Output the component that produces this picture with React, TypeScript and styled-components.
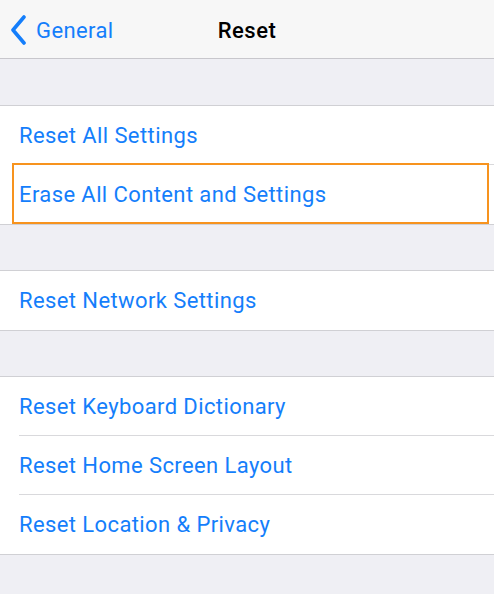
import React from 'react';
import styled, { createGlobalStyle } from 'styled-components';

const GlobalStyle = createGlobalStyle`
	html, body {
		margin: 0;
		padding: 0;
		background: #efeff4;
		font-family: Roboto, 'Liberation Sans', sans-serif;
	}
`;

const Screen = styled.div`
	width: 494px;
	height: 594px;
	background: #efeff4;
	overflow: hidden;
`;

const NavBar = styled.header`
	height: 59px;
	display: grid;
	grid-template-columns: 1fr auto 1fr;
	align-items: center;
	padding-top: 2px;
	box-sizing: border-box;
	background: #f7f7f7;
	border-bottom: 1px solid #c8c7cc;
`;

const BackButton = styled.div`
	display: flex;
	align-items: center;
	gap: 9px;
	padding-left: 10px;
	color: #147efb;
	font-size: 22px;
	letter-spacing: 0.4px;
`;

const Title = styled.div`
	font-size: 22px;
	font-weight: 500;
	letter-spacing: 0.5px;
	color: #000;
`;

const Group = styled.section`
	margin-top: 45px;
	background: #fff;
	border-top: 1px solid #d0d0d4;
	border-bottom: 1px solid #d0d0d4;
	&:first-of-type {
		margin-top: 46px;
	}
`;

const Row = styled.div<{ $last?: boolean }>`
	position: relative;
	height: 59px;
	display: flex;
	align-items: center;
	padding-left: 19px;
	font-size: 22px;
	letter-spacing: 0.4px;
	color: #147efb;
	&::after {
		content: '';
		display: ${({ $last }) => ($last ? 'none' : 'block')};
		position: absolute;
		left: 19px;
		right: 0;
		bottom: 0;
		height: 1px;
		background: #d9d9dc;
	}
`;

const Highlight = styled.div`
	position: absolute;
	left: 12px;
	right: 5px;
	top: -2px;
	bottom: 0;
	border: 2px solid #f7931e;
	box-sizing: border-box;
	pointer-events: none;
	z-index: 1;
`;

const Chevron = () => (
	<svg width="17" height="30" viewBox="0 0 17 30">
		<path d="M14 2 L3 15 L14 28" fill="none" stroke="#147efb" strokeWidth="3.6" strokeLinecap="round" strokeLinejoin="round" />
	</svg>
);

const groups: { label: string; highlight?: boolean }[][] = [
	[{ label: 'Reset All Settings' }, { label: 'Erase All Content and Settings', highlight: true }],
	[{ label: 'Reset Network Settings' }],
	[{ label: 'Reset Keyboard Dictionary' }, { label: 'Reset Home Screen Layout' }, { label: 'Reset Location & Privacy' }],
];

export default function App() {
	return (
		<>
			<GlobalStyle />
			<Screen>
				<NavBar>
					<BackButton>
						<Chevron />
						General
					</BackButton>
					<Title>Reset</Title>
					<div />
				</NavBar>
				{groups.map((items, gi) => (
					<Group key={gi}>
						{items.map((item, i) => (
							<Row key={item.label} $last={i === items.length - 1}>
								{item.highlight && <Highlight />}
								{item.label}
							</Row>
						))}
					</Group>
				))}
			</Screen>
		</>
	);
}
